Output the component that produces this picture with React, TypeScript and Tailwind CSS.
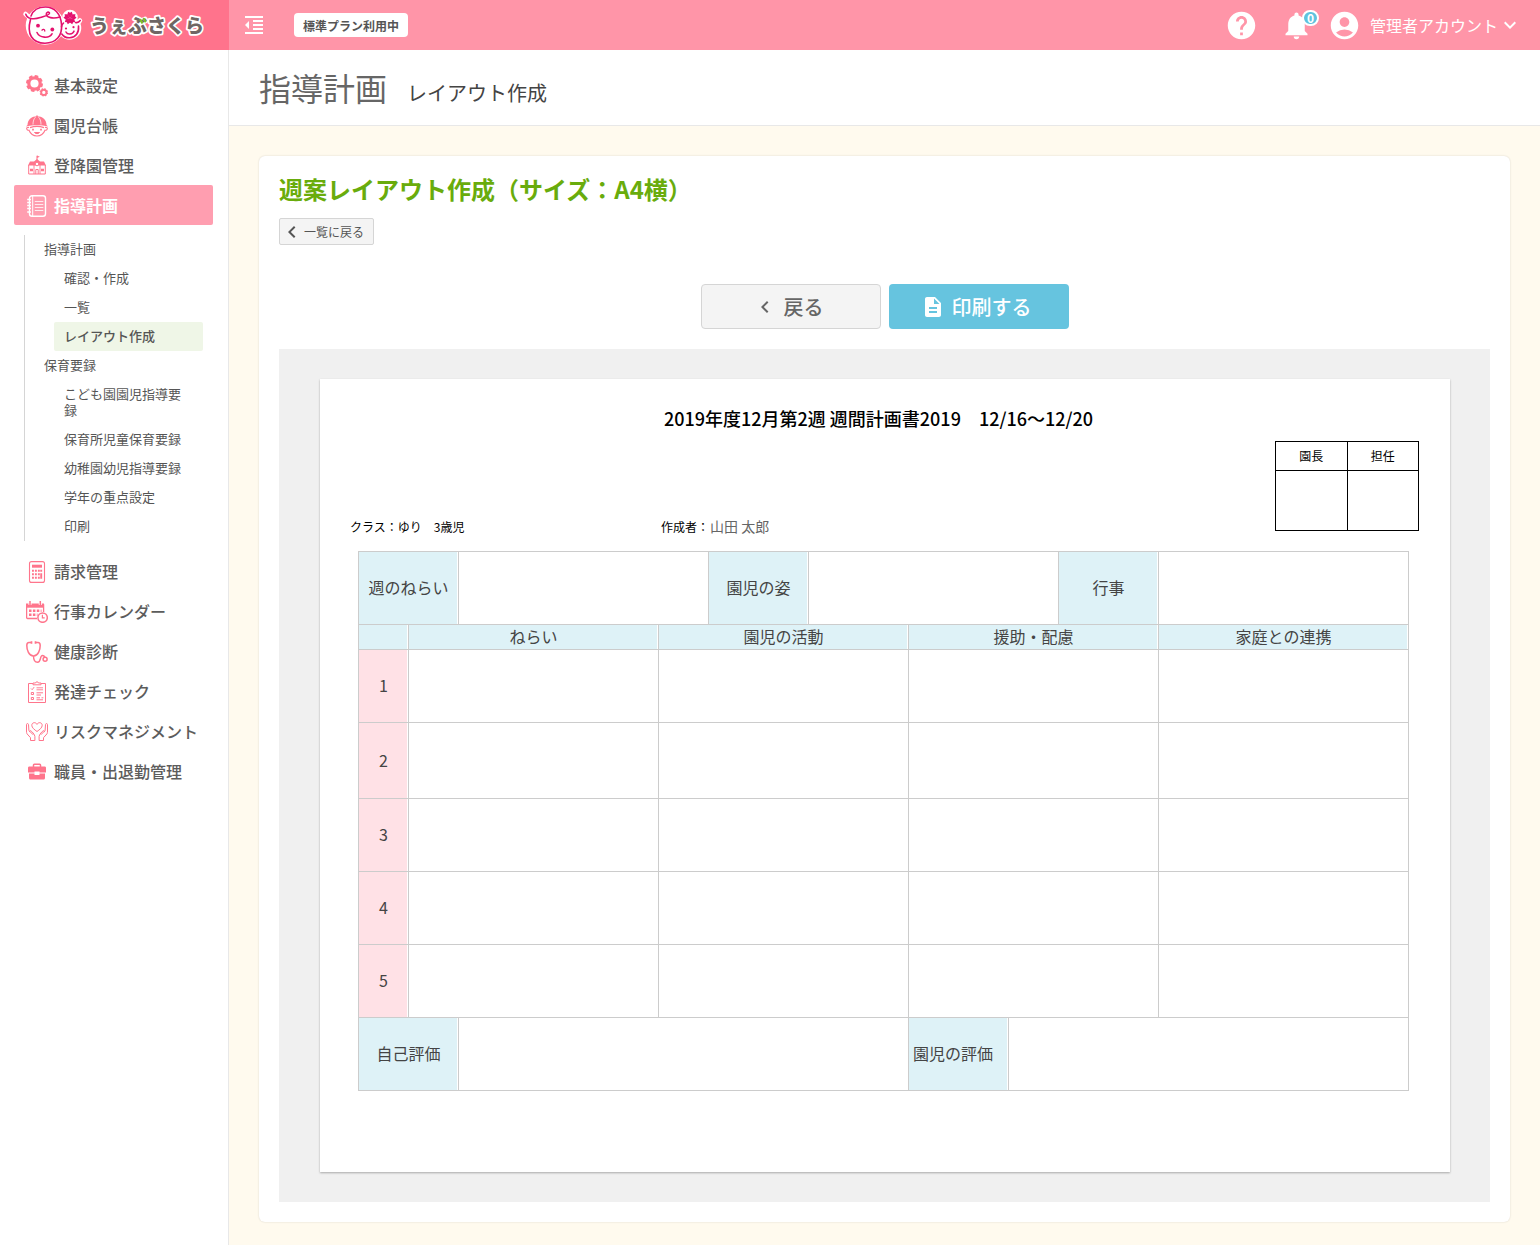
import type { ReactNode } from "react";
import {
  MdAccountCircle,
  MdChevronLeft,
  MdDescription,
  MdFormatIndentDecrease,
  MdHelp,
  MdKeyboardArrowDown,
  MdNotifications,
} from "react-icons/md";

const Icon = ({ children }: { children: ReactNode }) => (
  <svg
    viewBox="0 0 22 22"
    className="mt-0.5 w-[22px] h-[22px] shrink-0"
    fill="none"
    stroke="currentColor"
    aria-hidden="true"
  >
    {children}
  </svg>
);

const GearIcon = () => (
  <Icon>
    <circle cx="8.5" cy="8.5" r="5.7" strokeWidth="3.2" />
    <circle cx="8.5" cy="8.5" r="7.4" strokeWidth="2.2" strokeDasharray="3.5 2.31" />
    <circle cx="17.8" cy="17.4" r="2.6" strokeWidth="1.9" />
    <circle cx="17.8" cy="17.4" r="3.6" strokeWidth="1.2" strokeDasharray="1.6 1.23" />
  </Icon>
);

const ChildIcon = () => (
  <Icon>
    <path
      d="M1.500 10C1.500 4 6 1.200 11 1.200S20.500 4 20.500 10l1.500 1.600c-3-1-7-1.400-11-1.400S3 10.600 0 11.600z"
      fill="currentColor"
      stroke="none"
    />
    <path d="M7 9.500C7 6 8 3.500 9.500 2.200M15 9.500C15 6 14 3.500 12.500 2.200" stroke="#fff" strokeWidth=".7" />
    <path d="M11 .4v2" strokeWidth="1.600" />
    <path d="M3 12.500c-1.600-.6-2.600.6-2.200 1.600.3.900 1.200 1.300 2.200 1.100 1.400 3.500 4.700 5.800 8 5.800s6.600-2.300 8-5.800c1 .2 1.900-.2 2.200-1.100.4-1-.6-2.200-2.200-1.600" strokeWidth="1.100" />
    <path d="M4 12.600c4-1.300 10-1.300 14 0" strokeWidth="1.200" />
    <path d="M7 13.800v1.800M15 13.800v1.800" strokeWidth="1.700" />
    <path d="M8.500 17.500h5c-.5 1.500-4.500 1.500-5 0z" fill="currentColor" strokeWidth="1" />
  </Icon>
);

const SchoolIcon = () => (
  <Icon>
    <path d="M2 10.500 4 6.500h4L11 4l3 2.500h4l2 4z" fill="currentColor" stroke="none" />
    <path d="M11 5V.8" strokeWidth="1.100" />
    <path d="M11 .6l2.800 1.200L11 3z" fill="currentColor" stroke="none" />
    <path d="M2.700 10v9h16.600v-9" strokeWidth="1" />
    <circle cx="11" cy="9" r="1.800" fill="#fff" strokeWidth="1" />
    <path d="M8 19v-9M14 19v-9" strokeWidth=".9" />
    <path d="M9.800 19v-4.500h2.400V19" strokeWidth="1" />
    <path d="M4 15h3M15 15h3" strokeWidth="2.600" />
  </Icon>
);

const NotebookIcon = () => (
  <Icon>
    <rect x="3.500" y=".8" width="16" height="20.400" rx="2.500" strokeWidth="1.400" />
    <path d="M6.700 1v20" strokeWidth="1" />
    <path d="M1.200 4.500H5M1.200 7.500H5M1.200 10.500H5M1.200 13.500H5M1.200 17H5" strokeWidth="1.400" />
    <path d="M8.800 6.500h8.500M8.800 9.500h8.500M8.800 12.500h8.500M8.800 15.500h8.500" strokeWidth=".8" />
  </Icon>
);

const CalculatorIcon = () => (
  <Icon>
    <rect x="3.500" y=".6" width="15" height="20.800" rx="2" strokeWidth="1.100" />
    <path d="M6 5.200h10" strokeWidth="3" />
    <path d="M6 9.800h7.800M6 13.200h7.800M6 16.800h7.800" strokeWidth="1.900" strokeDasharray="1.900 1.050" />
    <path d="M15.200 8.800v1.900M15.200 12.200v5.600" strokeWidth="1.900" />
  </Icon>
);

const CalendarIcon = () => (
  <Icon>
    <path d="M11 17.500H1.500C.9 17.500.6 17.200.6 16.600V4h17v7" strokeWidth="1.300" />
    <path d="M0 2.500h18v4.200H0z" fill="currentColor" stroke="none" />
    <path d="M4 0v4M14.300 0v4" stroke="#fff" strokeWidth="3" />
    <path d="M4 0v4M14.300 0v4" strokeWidth="1.500" />
    <path d="M3 9.800h12.500M3 13.800h8.500" strokeWidth="2.400" strokeDasharray="2.500 1.400" />
    <circle cx="16.600" cy="16.600" r="4.700" fill="#fff" strokeWidth="1.500" />
    <path d="M16.400 13.800v3h2.300" strokeWidth="1.200" />
  </Icon>
);

const StethoscopeIcon = () => (
  <Icon>
    <path d="M5.500 1.500H3C1.500 1.500.8 2.700.8 4.500c0 4.500 2 10.500 6.700 10.500s6.700-6 6.700-10.500c0-1.800-.7-3-2.200-3H9.500" strokeWidth="1.500" />
    <path d="M5.500.2v2.600M9.500.2v2.600" strokeWidth="1.700" />
    <path d="M7.500 15c0 4 1.500 6.200 4 6.200 4 0 2-6.700 5-6.700 1.300 0 2 .8 2.500 2" strokeWidth="1.400" />
    <circle cx="19.100" cy="18.200" r="2" strokeWidth="1.500" />
  </Icon>
);

const ChecklistIcon = () => (
  <Icon>
    <path d="M7 2.500H2.500v19h17v-19H15" strokeWidth="1" />
    <path d="M7 3.800V2h2.500c.3-1.600 2.700-1.600 3 0H15v1.800z" strokeWidth="1" />
    <path d="M5 7.500l1.200 1.200 2-2.700M10.500 6.800h6.500M10.500 8.800h6.500" strokeWidth=".9" />
    <path d="M5.300 11.500h2.200v2H5.300zM5.300 16.500h2.200v2H5.300z" strokeWidth="1" />
    <path d="M10.500 11.800h6.500M10.500 14h4.500M10.500 16.800h3.500M15.500 16.800h1.800M10.500 18.800h6.500" strokeWidth="1" />
  </Icon>
);

const HandsIcon = () => (
  <Icon>
    <path d="M11 10.500C8.500 8.700 5.800 6.800 5.800 4.300c0-3 3.900-3.600 5.200-.9 1.300-2.700 5.200-2.100 5.200.9 0 2.500-2.700 4.400-5.200 6.200z" strokeWidth="1" />
    <path d="M4.500 19.500v-2.800L1 12.800C.6 12 .5 11 .5 10V3.500c0-1.200 1.900-1.200 2 0l.4 6 4.300 4.300M8.900 19.500v-4c0-2-3.300-5.300-4.200-5.800-.9-.3-1.600.5-1 1.400M4.500 19.500h4.400" strokeWidth="1" />
    <path d="M17.500 19.500v-2.800l3.500-3.900c.4-.8.500-1.800.5-2.800V3.500c0-1.200-1.900-1.200-2 0l-.4 6-4.300 4.300M13.100 19.500v-4c0-2 3.300-5.300 4.200-5.800.9-.3 1.600.5 1 1.400M17.500 19.500h-4.400" strokeWidth="1" />
  </Icon>
);

const BriefcaseIcon = () => (
  <Icon>
    <path d="M7.500 6V4c0-.5.300-.8.800-.8h5.400c.5 0 .8.300.8.800v2" strokeWidth="1.500" />
    <path
      d="M3.500 5.500h15c1 0 1.500.5 1.500 1.500v4.500h-6.500v-1h-5v1H2V7c0-1 .5-1.500 1.500-1.500zM3 12.500h5.500v1.500h5v-1.500H19V17c0 .9-.5 1.500-1.500 1.500h-13C3.500 18.500 3 17.900 3 17z"
      fill="currentColor"
      stroke="none"
    />
  </Icon>
);

const petals = [0, 72, 144, 216, 288];

const Faces = () => (
  <>
    <g fill="#fff" stroke="#fff" strokeWidth="4.500" strokeLinejoin="round" strokeLinecap="round">
      <circle cx="45" cy="25.500" r="17" />
      <circle cx="69.500" cy="28" r="9.500" />
      <path d="M30 18l-4.500-4M78 23l2-2.500" />
      <circle cx="70" cy="17.500" r="5.500" />
    </g>
    <g fill="none" stroke="#e4126e" strokeWidth="1.600" strokeLinecap="round">
      <path d="M30.500 19.500C26.500 34 32 43.200 45 43.200c11 0 17.500-7.500 16.500-18.700C60.800 14 54.500 7 45.500 7c-7 0-12.500 3.500-14.500 9" />
      <path d="M25.800 14.200c1 4.500 7.500 5.800 14.500 3.400 4.500-1.500 9.700-2.600 9.200-4.600-.6-1.800-3.500-.5-3.200 1.500.4 3 6.500 4.500 13.700 2.500" />
      <path d="M61.800 34c2 3 4.700 4 8 3.800 6-.4 9.400-5.300 8.700-11.800M75.500 22.500c2 .5 3.500-.3 4.700-2" />
      <path d="M63.500 23c-1.500 1.500-2 2.500-2 4" />
      <path d="M37 32.500c2.500 5.500 12 6.500 15 1.300M66 32c1.500 3 6.500 2.700 8-.8" />
      <path d="M42 30.200c.8-1.200 2.800-1 2.800.8" strokeWidth="1.300" />
    </g>
    <g fill="#e4126e">
      <circle cx="38" cy="25.700" r="1.900" />
      <circle cx="52.300" cy="29.500" r="1.900" />
      <circle cx="66" cy="28.500" r="1.100" />
      <circle cx="73.500" cy="27.200" r="1.100" />
      {petals.map((angle) => (
        <path
          key={angle}
          d="M0 0-2.700-3.500-1.800-6.300 0-5.300 1.800-6.300 2.700-3.500z"
          transform={`translate(70 18) rotate(${angle})`}
        />
      ))}
    </g>
  </>
);

const Logo = () => (
  <svg viewBox="0 0 228 50" className="w-[228px] h-[50px]" role="img" aria-label="うぇぶさくら">
    <Faces />
    <text
      x="90"
      y="33"
      fontSize="19"
      fontWeight="900"
      fill="#6f6664"
      stroke="#fff"
      strokeWidth="3.500"
      strokeLinejoin="round"
      paintOrder="stroke"
    >
      うぇぶさくら
    </text>
    <path d="M140.500 20l1.500 2.600M143.800 18.800l1.500 2.600" stroke="#7fbe26" strokeWidth="2.200" strokeLinecap="round" />
  </svg>
);

const menuTop = [
  { label: "基本設定", icon: <GearIcon /> },
  { label: "園児台帳", icon: <ChildIcon /> },
  { label: "登降園管理", icon: <SchoolIcon /> },
  { label: "指導計画", icon: <NotebookIcon />, active: true },
];

const menuBottom = [
  { label: "請求管理", icon: <CalculatorIcon /> },
  { label: "行事カレンダー", icon: <CalendarIcon /> },
  { label: "健康診断", icon: <StethoscopeIcon /> },
  { label: "発達チェック", icon: <ChecklistIcon /> },
  { label: "リスクマネジメント", icon: <HandsIcon /> },
  { label: "職員・出退勤管理", icon: <BriefcaseIcon /> },
];

const subMenu = [
  { title: "指導計画", items: ["確認・作成", "一覧", "レイアウト作成"] },
  {
    title: "保育要録",
    items: [
      "こども園園児指導要録",
      "保育所児童保育要録",
      "幼稚園幼児指導要録",
      "学年の重点設定",
      "印刷",
    ],
  },
];

type MenuItemProps = { label: string; icon: ReactNode; active?: boolean };

const MenuItem = ({ label, icon, active }: MenuItemProps) => (
  <li>
    <a
      href="#"
      className={
        active
          ? "flex items-center gap-1.5 h-10 pl-3 rounded-xs bg-[#ff9eb0] text-white font-bold"
          : "flex items-center gap-1.5 h-10 pl-3 text-[#ff758c] font-medium"
      }
    >
      {icon}
      <span className={active ? "text-white" : "text-[#5c5c5c]"}>{label}</span>
    </a>
  </li>
);

const Sidebar = () => (
  <nav className="w-[229px] shrink-0 border-r border-[#e8e8e8] bg-white pt-[15px] pl-3.5 pr-[15px]">
    <ul>
      {menuTop.map((m) => (
        <MenuItem key={m.label} {...m} />
      ))}
    </ul>
    <div className="my-2.5 ml-2.5 mr-2.5 pl-[9px] border-l border-[#d5d5d5] text-[13px] leading-4 text-[#555]">
      {subMenu.map((group) => (
        <div key={group.title}>
          <p className="px-2.5 pt-1.5 pb-[7px]">{group.title}</p>
          <ul className="ml-5">
            {group.items.map((item) => (
              <li key={item}>
                <a
                  href="#"
                  className={
                    item === "レイアウト作成"
                      ? "block px-2.5 pt-1.5 pb-[7px] rounded-xs bg-[#eff6e7] font-medium"
                      : "block px-2.5 pt-1.5 pb-[7px]"
                  }
                >
                  {item}
                </a>
              </li>
            ))}
          </ul>
        </div>
      ))}
    </div>
    <ul>
      {menuBottom.map((m) => (
        <MenuItem key={m.label} {...m} />
      ))}
    </ul>
  </nav>
);

const Header = () => (
  <header className="flex h-[50px] bg-[#ff95a8] text-white">
    <a href="#" className="w-[229px] shrink-0 bg-[#ff738c]">
      <Logo />
    </a>
    <div className="flex flex-1 items-center pl-[13px] pr-[18px]">
      <button type="button" aria-label="メニュー">
        <MdFormatIndentDecrease size={24} />
      </button>
      <span className="ml-7 h-6 rounded-sm bg-white px-[9px] pt-px text-xs leading-6 font-bold text-[#555]">
        標準プラン利用中
      </span>
      <div className="ml-auto flex items-center">
        <a href="#" aria-label="ヘルプ">
          <MdHelp size={33} />
        </a>
        <a href="#" aria-label="お知らせ" className="relative ml-[22px]">
          <MdNotifications size={33} />
          <span className="absolute top-px -right-1.5 h-4 w-[17px] rounded-full border-2 border-white bg-[#5ec3de] text-center text-xs leading-3 font-bold">
            0
          </span>
        </a>
        <button type="button" className="ml-[15px] flex items-center">
          <MdAccountCircle size={33} />
          <span className="ml-[9px]">管理者アカウント</span>
          <MdKeyboardArrowDown size={24} />
        </button>
      </div>
    </div>
  </header>
);

const cell = "border border-[#ccc]";
const labelCell =
  "border border-[#ccc] bg-[#def2f7] pb-0.5 shadow-[inset_-1px_0_0_#fff] font-normal text-center whitespace-nowrap";
const dayCell =
  "border border-[#ccc] bg-[#ffe1e6] pb-0.5 shadow-[inset_-1px_0_0_#fff] font-normal text-center";

const days = [
  { no: 1, row: "h-[73px]" },
  { no: 2, row: "h-[76px]" },
  { no: 3, row: "h-[73px]" },
  { no: 4, row: "h-[73px]" },
  { no: 5, row: "h-[73px]" },
];

const PlanTable = () => (
  <table className="w-full table-fixed border-collapse text-base leading-[22px] text-[#444]">
    <colgroup>
      <col className="w-[50px]" />
      <col className="w-[50px]" />
      <col className="w-[200px]" />
      <col className="w-[50px]" />
      <col className="w-[100px]" />
      <col className="w-[100px]" />
      <col className="w-[100px]" />
      <col className="w-[50px]" />
      <col className="w-[100px]" />
      <col className="w-[250px]" />
    </colgroup>
    <tbody>
      <tr className="h-[73px]">
        <th colSpan={2} className={labelCell}>週のねらい</th>
        <td colSpan={2} className={cell}></td>
        <th className={labelCell}>園児の姿</th>
        <td colSpan={3} className={cell}></td>
        <th className={labelCell}>行事</th>
        <td className={cell}></td>
      </tr>
      {/* 列見出し */}
      <tr className="h-[25px]">
        <th className={labelCell}></th>
        <th colSpan={2} className={labelCell}>ねらい</th>
        <th colSpan={3} className={labelCell}>園児の活動</th>
        <th colSpan={3} className={labelCell}>援助・配慮</th>
        <th className={labelCell}>家庭との連携</th>
      </tr>
      {days.map((day) => (
        <tr key={day.no} className={day.row}>
          <th className={dayCell}>{day.no}</th>
          <td colSpan={2} className={cell}></td>
          <td colSpan={3} className={cell}></td>
          <td colSpan={3} className={cell}></td>
          <td className={cell}></td>
        </tr>
      ))}
      {/* 評価 */}
      <tr className="h-[73px]">
        <th colSpan={2} className={labelCell}>自己評価</th>
        <td colSpan={4} className={cell}></td>
        <th className={labelCell}>
          <p className="pl-1 text-left">園児の評価</p>
        </th>
        <td colSpan={3} className={cell}></td>
      </tr>
    </tbody>
  </table>
);

const Paper = () => (
  <section className="bg-white pl-[30px] pr-[31px] pt-[27px] pb-[81px] text-xs text-black shadow-[0_1px_2px_rgba(0,0,0,0.3)]">
    <h3 className="pr-3 text-center text-lg leading-6 font-medium">
      2019年度12月第2週 週間計画書2019　12/16〜12/20
    </h3>
    <div className="mt-[11px] grid grid-cols-[29%_1fr_auto] items-end">
      <p className="leading-[18px]">クラス：ゆり　3歳児</p>
      <p className="pl-px leading-[18px]">
        作成者：<span className="ml-px text-sm leading-[18px] text-[#666]">山田 太郎</span>
      </p>
      <table className="mb-[5px] w-36 table-fixed border-collapse text-center">
        <thead>
          <tr className="h-[29px]">
            <th className="border border-black font-normal">園長</th>
            <th className="border border-black font-normal">担任</th>
          </tr>
        </thead>
        <tbody>
          <tr className="h-[60px]">
            <td className="border border-black"></td>
            <td className="border border-black"></td>
          </tr>
        </tbody>
      </table>
    </div>
    <div className="mt-[15px] pl-2 pr-3">
      <PlanTable />
    </div>
  </section>
);

const App = () => {
  return (
    <div className="flex min-h-screen flex-col font-['Noto_Sans_CJK_JP',sans-serif] text-base text-[#555]">
      <Header />
      <div className="flex flex-1">
        <Sidebar />
        <main className="min-w-0 flex-1 bg-[#fffaee]">
          <div className="flex h-[76px] items-baseline gap-5 border-b border-[#e8e8e8] bg-white pl-[30px] pt-[13px]">
            <h1 className="text-[32px] leading-[48px] text-[#666]">指導計画</h1>
            <p className="text-xl text-[#444]">レイアウト作成</p>
          </div>
          <div className="mx-[30px] mt-[30px] rounded-md bg-white px-5 pt-[19px] pb-5 shadow-[0_0_2px_rgba(0,0,0,0.16)]">
            <h2 className="text-2xl leading-7 font-bold text-[#69ac0c]">
              週案レイアウト作成（サイズ：A4横）
            </h2>
            <button
              type="button"
              className="mt-[15px] flex h-[27px] items-center rounded-xs border border-[#d5d5d5] bg-[#f4f4f4] pr-[9px] text-xs"
            >
              <MdChevronLeft size={24} />
              一覧に戻る
            </button>
            <div className="mt-[39px] flex justify-center gap-2 text-xl font-medium">
              <button
                type="button"
                className="flex h-[45px] w-[180px] items-center justify-center gap-[7px] rounded-sm border border-[#d5d5d5] bg-[#f4f4f4] pr-[5px] text-[#666]"
              >
                <MdChevronLeft size={24} />
                戻る
              </button>
              <button
                type="button"
                className="flex h-[45px] w-[180px] items-center justify-center gap-[7px] rounded-sm bg-[#66c4df] pr-[5px] text-white"
              >
                <MdDescription size={24} />
                印刷する
              </button>
            </div>
            <div className="mt-5 bg-[#f0f0f0] py-[30px] pl-[41px] pr-10">
              <Paper />
            </div>
          </div>
        </main>
      </div>
    </div>
  );
};

export default App;
